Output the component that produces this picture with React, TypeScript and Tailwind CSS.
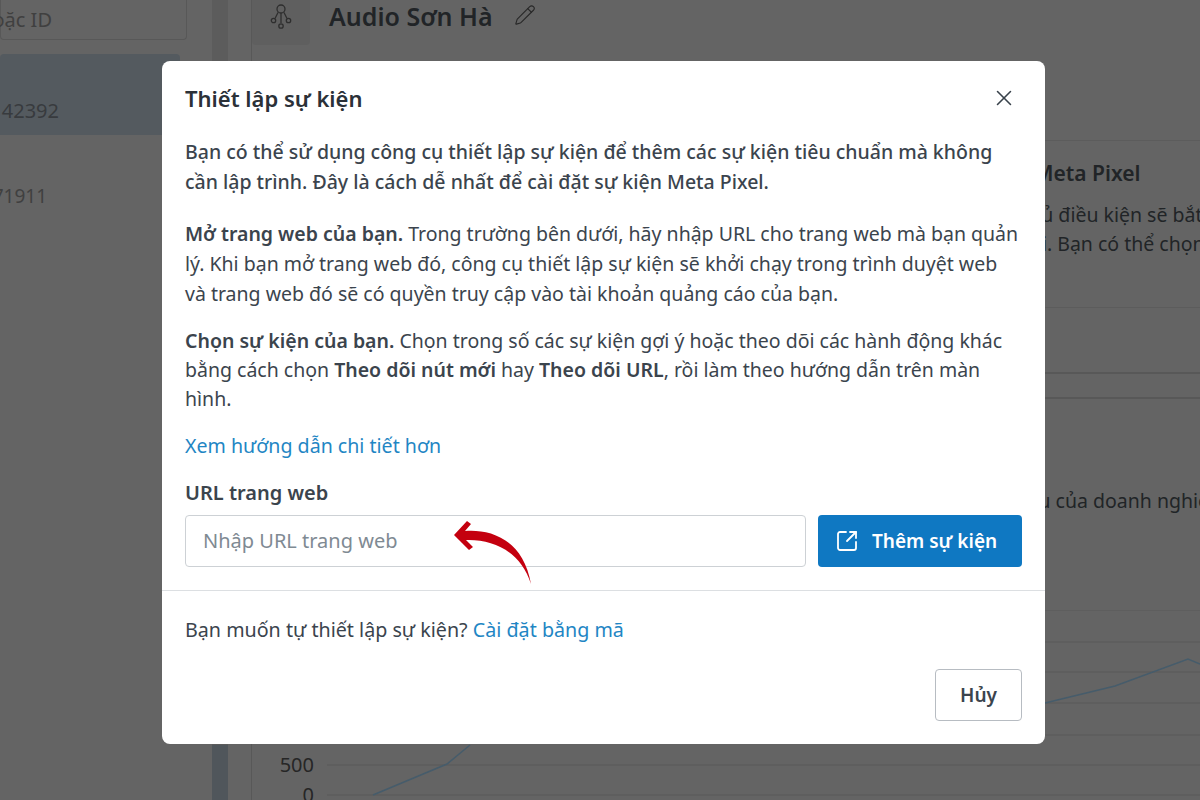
import { SquareArrowOutUpRight, X, Pencil } from "lucide-react";

function Background() {
  return (
    <div className="flex h-[800px] w-[1200px] overflow-hidden bg-[#646464] text-[#212427]">
      {/* account list */}
      <div className="w-[212px] shrink-0">
        <div className="mr-[25px] flex h-10 items-center justify-end rounded-b border border-t-0 border-[#585858] pr-[134px] text-[20px] text-[#404040]">
          <span className="whitespace-nowrap">hoặc ID</span>
        </div>
        <div className="mr-[32px] mt-[14px] flex h-[81px] items-end justify-end rounded-t bg-[#545a5f] pb-[9px] pr-[121px] text-[20px] text-[#383b3e]">
          42392
        </div>
        <div className="flex h-[123px] items-center justify-end pr-[165px] text-[19px] text-[#404040]">71911</div>
      </div>
      <div className="flex w-[16px] shrink-0 flex-col justify-end bg-[#5c5c5c]">
        <div className="h-[55px] bg-[#50565b]" />
      </div>
      <div className="w-6 shrink-0 border-r border-[#585858]" />
      {/* main panel */}
      <div className="min-w-0 flex-1">
        <div className="flex h-[45px] items-start">
          <div className="flex h-[45px] w-[58px] items-start justify-center rounded-b bg-[#5f5f5f] pt-[3px]">
            <svg width="24" height="28" viewBox="0 0 24 28" fill="none" stroke="#2e2e2e" strokeWidth="1.3">
              <circle cx="12" cy="6" r="4" />
              <path d="M12 10v10M9 9.5 6 15.5M15 9.5 18 15.5" />
              <circle cx="4.5" cy="17.5" r="2.2" />
              <circle cx="19.5" cy="17.5" r="2.2" />
              <circle cx="12" cy="23" r="2.2" />
            </svg>
          </div>
          <span className="ml-[19px] mt-[-2px] text-[25px] font-semibold whitespace-nowrap">Audio Sơn Hà</span>
          <Pencil className="ml-[21px] mt-[4px] h-[22px] w-[22px]" strokeWidth={1.2} color="#282828" />
        </div>
        <div className="mt-[95px] h-[167px] overflow-hidden border-t border-[#5c5c5c] pl-[782px] pt-[17px] text-[19.5px] leading-[29px] whitespace-nowrap">
          <p className="text-[21px] leading-[30px] font-semibold">Meta Pixel</p>
          <p className="ml-[-7px] mt-[12px]">Đủ điều kiện sẽ bắt đầu</p>
          <p className="ml-[-2px]">vi. Bạn có thể chọn</p>
        </div>
        <div className="h-[65px] border-t border-[#5c5c5c]" />
        <div className="h-[25px] border-t-2 border-[#585858]" />
        <div className="h-[213px] border-t-2 border-[#585858]">
          <p className="overflow-hidden pl-[756px] pt-[87px] text-[19.5px] leading-[30px] whitespace-nowrap">Hiệu của doanh nghiệp</p>
        </div>
        <div className="flex">
          <div className="w-[62px] shrink-0 pt-[140px] text-right text-[20px] leading-[30px] text-[#262626]">
            <p>500</p>
            <p>0</p>
          </div>
          <svg className="shrink-0" width="886" height="190" viewBox="0 0 886 190" fill="none">
            <g stroke="#595959" strokeWidth="1">
              <path d="M13 0H886M13 32H886M13 62H886M13 93H886M13 125H886M13 155H886M13 185H886" />
            </g>
            <path d="M59 185 133 154 156 135M731 93 801 76 874 49 886 54" stroke="#465c6b" strokeWidth="1.6" />
          </svg>
        </div>
      </div>
    </div>
  );
}

export default function App() {
  return (
    <div className="relative h-[800px] w-[1200px] overflow-hidden font-['Noto_Sans',sans-serif]">
      <Background />
      <div className="absolute left-[162px] top-[61px] flex h-[683px] w-[883px] flex-col rounded-lg bg-white">
        <div className="flex items-center justify-between pl-[23px] pr-[28px] pt-[21px]">
          <h2 className="text-[22px] leading-[32px] font-semibold text-[#2b3138]">Thiết lập sự kiện</h2>
          <X className="h-[26px] w-[26px]" strokeWidth={1.4} color="#39424b" />
        </div>
        <div className="px-[23px] pt-[23px] text-[19.5px] leading-[30px] text-[#3b444d]">
          <p className="font-medium">
            Bạn có thể sử dụng công cụ thiết lập sự kiện để thêm các sự kiện tiêu chuẩn mà không cần lập trình. Đây là cách dễ nhất để cài đặt sự kiện Meta Pixel.
          </p>
          <p className="mt-[22px]">
            <b className="font-semibold">Mở trang web của bạn.</b> Trong trường bên dưới, hãy nhập URL cho trang web mà bạn quản lý. Khi bạn mở trang web đó, công cụ thiết lập sự kiện sẽ khởi chạy trong trình duyệt web và trang web đó sẽ có quyền truy cập vào tài khoản quảng cáo của bạn.
          </p>
          <p className="mt-[17px] leading-[29px]">
            <b className="font-semibold">Chọn sự kiện của bạn.</b> Chọn trong số các sự kiện gợi ý hoặc theo dõi các hành động khác bằng cách chọn <b className="font-semibold">Theo dõi nút mới</b> hay <b className="font-semibold">Theo dõi URL</b>, rồi làm theo hướng dẫn trên màn hình.
          </p>
          <p className="mt-[18px] text-[19.6px] text-[#1f86c4]">Xem hướng dẫn chi tiết hơn</p>
          <p className="mt-[17px] text-[20px] font-semibold">URL trang web</p>
          <div className="mt-[7px] flex gap-[12px]">
            <div className="flex h-[52px] flex-1 items-center rounded border border-[#cdd1d5] pl-[17px] text-[20px] text-[#7f8a93]">
              Nhập URL trang web
            </div>
            <button className="flex h-[52px] w-[204px] items-center gap-[13px] rounded bg-[#0f78c2] pl-[17px] text-[19px] font-semibold text-white">
              <SquareArrowOutUpRight className="h-[24px] w-[24px]" strokeWidth={1.8} />
              Thêm sự kiện
            </button>
          </div>
        </div>
        <div className="mt-[23px] border-t border-[#dcdfe2] px-[23px] pt-[24px] text-[19.7px] leading-[30px] text-[#3b444d]">
          Bạn muốn tự thiết lập sự kiện? <span className="text-[#1f86c4]">Cài đặt bằng mã</span>
        </div>
        <div className="mt-auto flex justify-end px-[23px] pb-[23px]">
          <button className="h-[52px] w-[87px] rounded border border-[#b7bcc2] text-[19px] font-semibold text-[#3b444d]">Hủy</button>
        </div>
      </div>
      <svg className="absolute left-[450px] top-[515px]" width="85" height="72" viewBox="0 0 85 72">
        <path d="M4 20 17 6l4 3-6 7c24-2 58 7 66 53C71 37 44 24 16 25l7 7-4 3Z" fill="#c4000f" />
      </svg>
    </div>
  );
}
